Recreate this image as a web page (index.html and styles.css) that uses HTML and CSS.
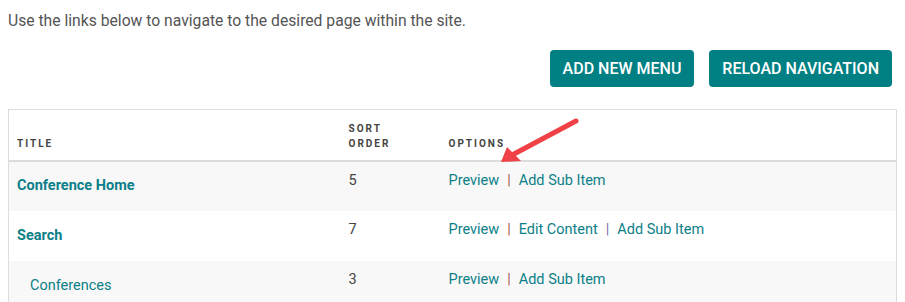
FILE: index.html
```html
<!DOCTYPE html>
<html lang="en">
<head>
    <meta charset="UTF-8">
    <title>Navigation</title>
    <link rel="stylesheet" href="styles.css">
</head>
<body>
    <p class="intro">Use the links below to navigate to the desired page within the site.</p>
    <div class="actions">
        <button class="btn">ADD NEW MENU</button>
        <button class="btn">RELOAD NAVIGATION</button>
    </div>
    <div class="table-wrap">
        <table class="nav-table">
            <thead>
                <tr>
                    <th class="col-title">TITLE</th>
                    <th class="col-sort">SORT<br>ORDER</th>
                    <th class="col-options">OPTIONS</th>
                </tr>
            </thead>
            <tbody>
                <tr>
                    <td class="title top"><a href="#">Conference Home</a></td>
                    <td>5</td>
                    <td class="options"><a href="#">Preview</a><span class="sep">|</span><a href="#">Add Sub Item</a></td>
                </tr>
                <tr>
                    <td class="title top"><a href="#">Search</a></td>
                    <td>7</td>
                    <td class="options"><a href="#">Preview</a><span class="sep">|</span><a href="#">Edit Content</a><span class="sep alt">|</span><a href="#">Add Sub Item</a></td>
                </tr>
                <tr>
                    <td class="title sub"><a href="#">Conferences</a></td>
                    <td>3</td>
                    <td class="options"><a href="#">Preview</a><span class="sep">|</span><a href="#">Add Sub Item</a></td>
                </tr>
            </tbody>
        </table>
        <svg class="arrow" width="100" height="60" viewBox="0 0 100 60">
            <line x1="86" y1="11" x2="24" y2="44" stroke="#ef4146" stroke-width="5" stroke-linecap="round"/>
            <polygon points="11,52 17,37 31,51" fill="#ef4146"/>
        </svg>
    </div>
</body>
</html>
```

FILE: styles.css
```css
* { box-sizing: border-box; }
body { margin: 8px; font-family: Roboto, "Liberation Sans", Arial, sans-serif; color: #555; background: #fff; }
.intro { margin: 0; padding-top: 3px; font-size: 15.7px; line-height: 20px; color: #555; }
.actions { display: flex; justify-content: flex-end; gap: 15px; margin: 19px 5px 0 0; }
.btn { background-color: #008083; color: white; border: none; border-radius: 4px; height: 37px; padding: 0 13px; font-family: inherit; font-size: 16px; font-weight: 500; cursor: pointer; }
.table-wrap { position: relative; margin-top: 22px; }
.nav-table { width: 889px; border-collapse: collapse; border: 1px solid #ddd; border-bottom: none; }
.nav-table th { font-size: 10px; font-weight: 700; letter-spacing: 2px; color: #444; text-align: left; vertical-align: bottom; padding: 0 8px 9px; line-height: 15px; height: 51px; border-bottom: 2px solid #ddd; }
.col-title { width: 332px; }
.col-sort { width: 100px; }
.nav-table td { font-size: 14.5px; color: #444; vertical-align: top; padding: 11px 8px 0; height: 50px; line-height: 16px; }
.nav-table tbody tr:nth-child(odd) { background: #f8f8f8; }
.nav-table a { color: #0c8088; text-decoration: none; }
.title.top { vertical-align: middle; padding-top: 0; padding-bottom: 0; }
.title.top a { font-weight: 700; }
.title.sub { vertical-align: middle; padding: 0 8px 0 21px; }
.sep { color: #a85a4c; margin: 0 8px; }
.sep.alt { color: #7a6fa6; }
.arrow { position: absolute; left: 482px; top: 1px; }
```
